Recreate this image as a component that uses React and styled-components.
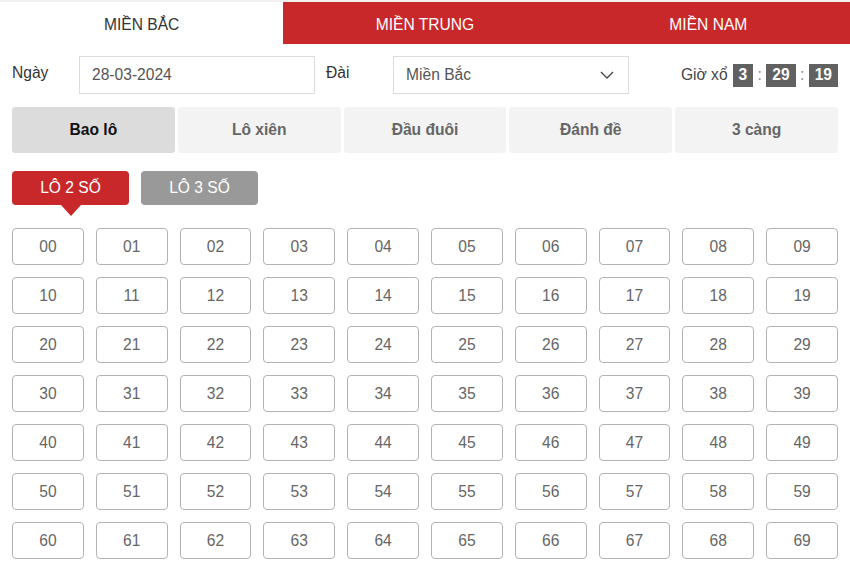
import React, { useState } from "react";
import styled, { createGlobalStyle } from "styled-components";

const Global = createGlobalStyle`
  html, body { margin: 0; padding: 0; background: #fff; }
  body { font-family: "Liberation Sans", Arial, sans-serif; font-size: 15.6px; color: #333; }
  * { box-sizing: border-box; }
`;

const RED = "#c8282a";

const Page = styled.div`
  width: 850px;
  border-top: 2px solid #f0f0f0;
`;

const RegionTabs = styled.div`
  display: grid;
  grid-template-columns: repeat(3, 1fr);
  height: 42px;
  background: ${RED};
`;

const RegionTab = styled.div`
  display: flex;
  align-items: center;
  justify-content: center;
  padding-top: 4px;
  text-transform: uppercase;
  font-size: 15.6px;
  color: ${(p) => (p.$active ? "#333" : "#fff")};
  background: ${(p) => (p.$active ? "#fff" : "transparent")};
`;

const Content = styled.div`
  padding: 0 12px;
`;

const FormRow = styled.div`
  display: flex;
  align-items: center;
  margin-top: 12px;
  height: 38px;
`;

const Label = styled.div`
  width: 67px;
  margin-top: -5px;
  margin-left: ${(p) => p.$offset || 0}px;
  color: #333;
`;

const Field = styled.div`
  width: 236px;
  height: 38px;
  border: 1px solid #dcdcdc;
  display: flex;
  align-items: center;
  justify-content: space-between;
  padding: 0 14px 0 12px;
  color: #555;
`;

const Clock = styled.div`
  margin-left: auto;
  display: flex;
  align-items: center;
  color: #444;
`;

const ClockLabel = styled.span`
  margin-right: 5px;
`;

const ClockBox = styled.span`
  display: inline-flex;
  align-items: center;
  justify-content: center;
  height: 23px;
  padding: 0 6px;
  background: #616161;
  color: #fff;
  font-weight: bold;
`;

const Colon = styled.span`
  width: 13px;
  text-align: center;
  color: #888;
`;

const BetTabs = styled.div`
  display: grid;
  grid-template-columns: repeat(5, 1fr);
  gap: 3px;
  margin-top: 13px;
`;

const BetTab = styled.div`
  height: 46px;
  border-radius: 3px;
  display: flex;
  align-items: center;
  justify-content: center;
  font-weight: bold;
  background: ${(p) => (p.$active ? "#dcdcdc" : "#f3f3f3")};
  color: ${(p) => (p.$active ? "#111" : "#666")};
`;

const LoRow = styled.div`
  display: flex;
  gap: 12px;
  margin-top: 18px;
`;

const LoButton = styled.div`
  position: relative;
  width: 117px;
  height: 34px;
  border-radius: 4px;
  display: flex;
  align-items: center;
  justify-content: center;
  color: #fff;
  background: ${(p) => (p.$active ? RED : "#999")};
  &::after {
    content: "";
    display: ${(p) => (p.$active ? "block" : "none")};
    position: absolute;
    left: 50%;
    top: 100%;
    transform: translateX(-50%);
    border-left: 10px solid transparent;
    border-right: 10px solid transparent;
    border-top: 11px solid ${RED};
  }
`;

const NumberGrid = styled.div`
  display: grid;
  grid-template-columns: repeat(10, 1fr);
  column-gap: 12px;
  row-gap: 12px;
  margin-top: 23px;
`;

const NumberCell = styled.div`
  height: 37px;
  border: 1px solid #b3b3b3;
  border-radius: 4px;
  display: flex;
  align-items: center;
  justify-content: center;
  color: #666;
`;

const Chevron = () => (
  <svg width="14" height="8" viewBox="0 0 14 8" fill="none">
    <path d="M1 1l6 6 6-6" stroke="#444" strokeWidth="1.3" />
  </svg>
);

export default function App() {
  const [region] = useState(0);
  const regions = ["Miền Bắc", "Miền Trung", "Miền Nam"];
  const bets = ["Bao lô", "Lô xiên", "Đầu đuôi", "Đánh đề", "3 càng"];
  const nums = Array.from({ length: 70 }, (_, i) => String(i).padStart(2, "0"));
  return (
    <Page>
      <Global />
      <RegionTabs>
        {regions.map((r, i) => (
          <RegionTab key={r} $active={i === region}>{r}</RegionTab>
        ))}
      </RegionTabs>
      <Content>
        <FormRow>
          <Label>Ngày</Label>
          <Field>28-03-2024</Field>
          <Label $offset={11}>Đài</Label>
          <Field>
            <span>Miền Bắc</span>
            <Chevron />
          </Field>
          <Clock>
            <ClockLabel>Giờ xổ</ClockLabel>
            <ClockBox>3</ClockBox>
            <Colon>:</Colon>
            <ClockBox>29</ClockBox>
            <Colon>:</Colon>
            <ClockBox>19</ClockBox>
          </Clock>
        </FormRow>
        <BetTabs>
          {bets.map((b, i) => (
            <BetTab key={b} $active={i === 0}>{b}</BetTab>
          ))}
        </BetTabs>
        <LoRow>
          <LoButton $active>LÔ 2 SỐ</LoButton>
          <LoButton>LÔ 3 SỐ</LoButton>
        </LoRow>
        <NumberGrid>
          {nums.map((n) => (
            <NumberCell key={n}>{n}</NumberCell>
          ))}
        </NumberGrid>
      </Content>
    </Page>
  );
}
